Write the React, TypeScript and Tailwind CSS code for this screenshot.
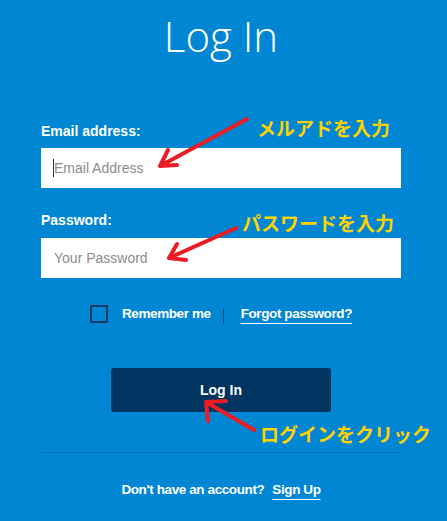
import { useState } from 'react'

const sans = "font-['Liberation_Sans',Arial,sans-serif]"
const jp = "font-['Noto_Sans_CJK_JP',sans-serif]"

function Arrows() {
  return (
    <svg
      className="pointer-events-none absolute inset-0"
      width="447"
      height="521"
      viewBox="0 0 447 521"
      fill="none"
      stroke="#ec1c24"
      strokeWidth="4"
      strokeLinecap="round"
      strokeLinejoin="round"
    >
      {/* email arrow */}
      <path d="M247 119 L160 166 M160 166 L168 150 M160 166 L177 165" />
      {/* password arrow */}
      <path d="M236 228 L169 258 M169 258 L177 244 M169 258 L186 260" />
      {/* button arrow */}
      <path d="M254 430 L206 402 M206 402 L208 421 M206 402 L226 401" />
    </svg>
  )
}

export default function App() {
  const [remember, setRemember] = useState(false)

  return (
    <div className={`relative h-[521px] w-[447px] overflow-hidden bg-[#0086d3] text-white ${sans}`}>
      <div className="ml-[41px] flex w-[360px] flex-col">
        <h1 className="pt-[14px] text-center font-['Open_Sans',sans-serif] text-[42px] leading-[44px] font-light">
          Log In
        </h1>

        <label className="mt-[63px] mb-[7px] text-[14px] leading-[20px] font-bold">Email address:</label>
        <div className="relative">
          <input
            type="email"
            placeholder="Email Address"
            className="h-[40px] w-full bg-white pl-[13px] text-[14px] text-gray-800 outline-none placeholder:text-[#8c8c8c]"
          />
          <span className="absolute top-[11px] left-[12px] h-[18px] w-px bg-[#333]" />
        </div>

        <label className="mt-[22px] mb-[8px] text-[14px] leading-[20px] font-bold">Password:</label>
        <input
          type="password"
          placeholder="Your Password"
          className="h-[40px] w-full bg-white pl-[13px] text-[14px] text-gray-800 outline-none placeholder:text-[#8c8c8c]"
        />

        <div className="mt-[24px] flex h-[24px] items-center justify-center text-[13.5px] font-bold tracking-[-0.4px]">
          <button
            type="button"
            onClick={() => setRemember(!remember)}
            className="h-[18px] w-[18px] rounded-[1px] border-2 border-[#0b3b67]"
          />
          <span className="ml-[14px]">Remember me</span>
          <span className="mx-[12px] mt-[4px] h-[15px] w-px bg-[#164a74]" />
          <a href="#" className="ml-[5px] underline decoration-1 underline-offset-[5px]">
            Forgot password?
          </a>
        </div>

        <button
          type="button"
          className="mx-auto mt-[42px] h-[44px] w-[220px] rounded-[3px] bg-[#003562] text-[14px] font-bold"
        >
          Log In
        </button>

        <div className="mt-[40px] h-px bg-[#0070b5]" />

        <p className="mt-[27px] text-center text-[13.5px] leading-[20px] font-bold tracking-[-0.4px]">
          Don't have an account?
          <a href="#" className="ml-[8px] underline decoration-1 underline-offset-[5px]">
            Sign Up
          </a>
        </p>
      </div>

      <Arrows />
      <span className={`absolute top-[118px] left-[257px] text-[19px] leading-[19px] font-bold text-[#ffd200] ${jp}`}>
        メルアドを入力
      </span>
      <span className={`absolute top-[213px] left-[242px] text-[19px] leading-[19px] font-bold text-[#ffd200] ${jp}`}>
        パスワードを入力
      </span>
      <span className={`absolute top-[424px] left-[260px] text-[19px] leading-[19px] font-bold text-[#ffd200] ${jp}`}>
        ログインをクリック
      </span>
    </div>
  )
}
